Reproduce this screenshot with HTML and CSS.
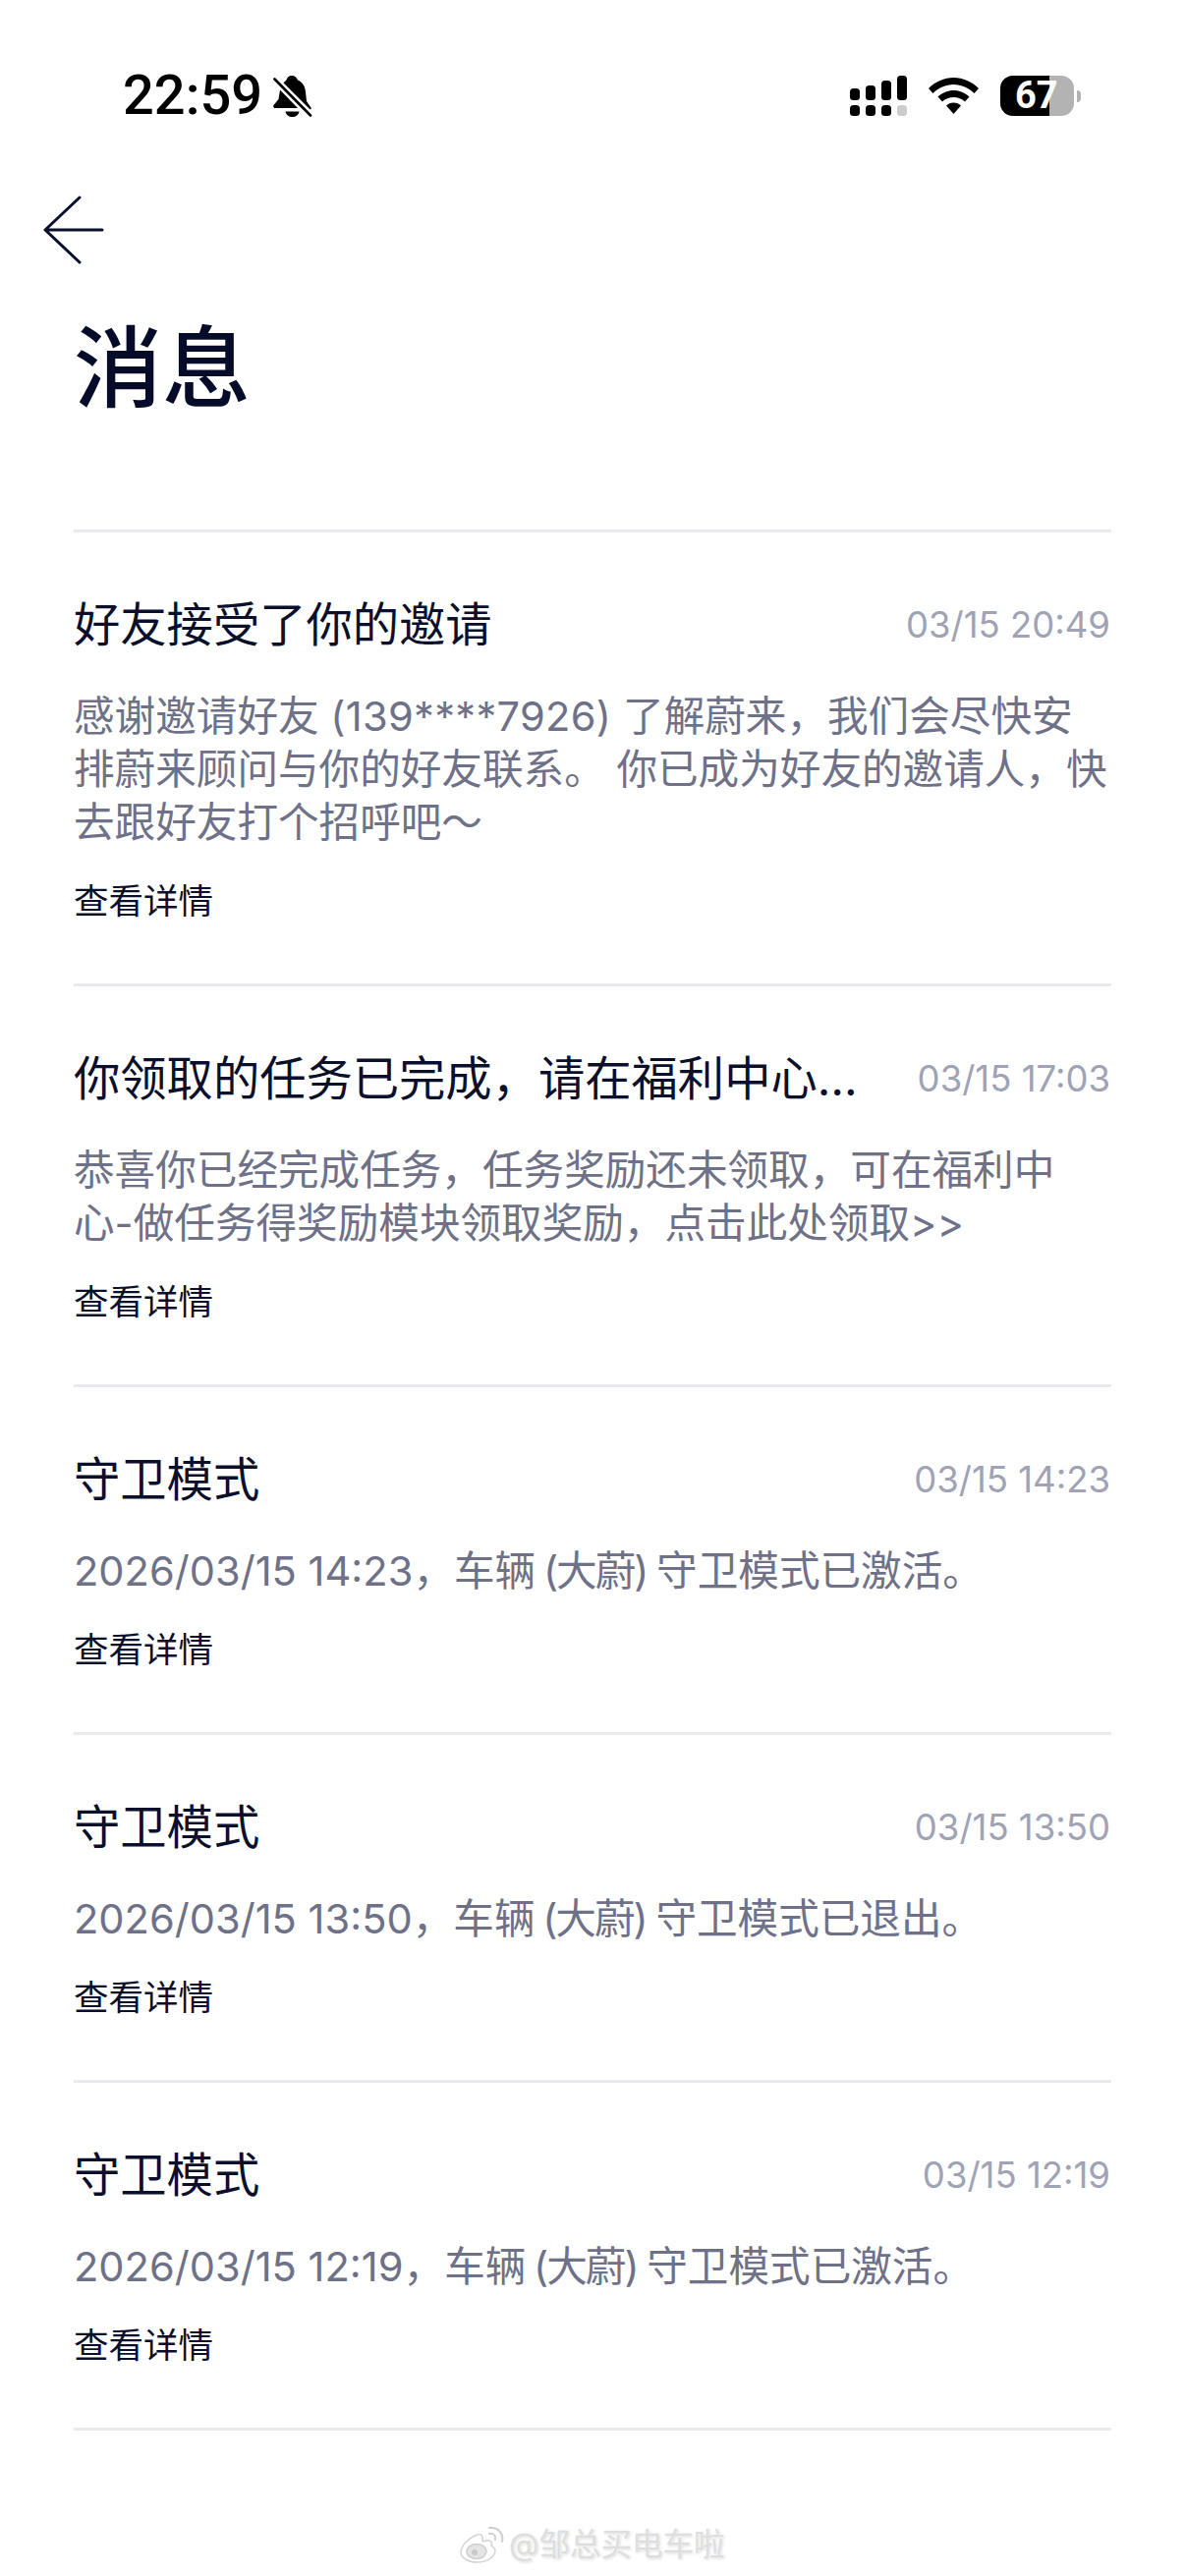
FILE: index.html
```html
<!DOCTYPE html>
<html>
<head>
    <meta charset="utf-8">
    <link rel="stylesheet" href="styles.css">
</head>
<body>
    <div class="phone">
        <div class="status-bar">
            <div class="status-left">
                <span class="time">22:59</span>
                <svg class="bell" width="40" height="42" viewBox="0 0 40 42">
                    <path d="M19 0c3 0 5 2 6 4.500 5 2 7.500 6.500 8 12l1 9.500 4.500 6.500c.5 1 0 2-1 2h-1.500L9.500 8.500C11 6.500 13 5 13.500 4.500 14 2 16 0 19 0z"/>
                    <path d="M7 14.500 25 33H2c-1.500 0-2.300-1.500-1.500-3L5.500 24z"/>
                    <path d="M12.500 36.500h14c-.5 3.500-3.500 5.500-7 5.500s-6.500-2-7-5.500z"/>
                    <path class="bell-gap" d="M5 3.500 39 37.500"/>
                    <path class="bell-slash" d="M1.500 3.500 38 40.500"/>
                </svg>
            </div>
            <div class="status-right">
                <svg class="signal" width="58" height="41" viewBox="0 0 58 41">
                    <rect x="0" y="13" width="10" height="12" rx="3.500"/>
                    <rect x="16" y="10" width="10" height="15" rx="3.500"/>
                    <rect x="32" y="5" width="10" height="20" rx="3.500"/>
                    <rect x="48" y="0" width="10" height="25" rx="3.500"/>
                    <rect x="0" y="30" width="10" height="11" rx="3.500"/>
                    <rect x="16" y="30" width="10" height="11" rx="3.500"/>
                    <rect x="32" y="30" width="10" height="11" rx="3.500"/>
                    <rect x="48" y="30" width="10" height="11" rx="3.500" fill="#ccc"/>
                </svg>
                <svg class="wifi" width="51" height="37" viewBox="0 0 51 37">
                    <path d="M25.500 0C35 0 44 4 51 11l-4.500 5C41 10.500 33.500 7 25.500 7S10 10.500 4.500 16L0 11C7 4 16 0 25.500 0z"/>
                    <path d="M25.500 13c6 0 11.500 2.500 16 6.500l-4.500 5c-3-3-7-4.500-11.500-4.500S17 21.500 14 24.500l-4.500-5C14 15.500 19.500 13 25.500 13z"/>
                    <path d="M25.500 25.500c3 0 5.500 1 7.500 3L25.500 37 18 28.500c2-2 4.500-3 7.500-3z"/>
                </svg>
                <div class="battery">
                    <div class="battery-body"><span class="battery-fill"></span><span class="battery-num">67</span></div>
                    <span class="battery-nub"></span>
                </div>
            </div>
        </div>

        <div class="nav">
            <svg class="back" width="64" height="70" viewBox="0 0 64 70">
                <path d="M38 2 3 35l35 33M3 35h58"/>
            </svg>
        </div>
        <h1 class="page-title">消息</h1>

        <ul class="msg-list">
            <li class="msg">
                <div class="msg-head">
                    <span class="msg-title">好友接受了你的邀请</span>
                    <span class="msg-date">03/15 20:49</span>
                </div>
                <p class="msg-body">感谢邀请好友 <span class="phone-num">(139****7926)</span> 了解蔚来，我们会尽快安<br>排蔚来顾问与你的好友联系。 你已成为好友的邀请人，快<br>去跟好友打个招呼吧～</p>
                <a class="msg-link">查看详情</a>
            </li>
            <li class="msg">
                <div class="msg-head">
                    <span class="msg-title">你领取的任务已完成，请在福利中心…</span>
                    <span class="msg-date">03/15 17:03</span>
                </div>
                <p class="msg-body">恭喜你已经完成任务，任务奖励还未领取，可在福利中<br>心-做任务得奖励模块领取奖励，点击此处领取&gt;&gt;</p>
                <a class="msg-link">查看详情</a>
            </li>
            <li class="msg">
                <div class="msg-head">
                    <span class="msg-title">守卫模式</span>
                    <span class="msg-date">03/15 14:23</span>
                </div>
                <p class="msg-body">2026/03/15 14:23，车辆 <span class="car-name">(大蔚)</span> 守卫模式已激活。</p>
                <a class="msg-link">查看详情</a>
            </li>
            <li class="msg">
                <div class="msg-head">
                    <span class="msg-title">守卫模式</span>
                    <span class="msg-date">03/15 13:50</span>
                </div>
                <p class="msg-body">2026/03/15 13:50，车辆 <span class="car-name">(大蔚)</span> 守卫模式已退出。</p>
                <a class="msg-link">查看详情</a>
            </li>
            <li class="msg">
                <div class="msg-head">
                    <span class="msg-title">守卫模式</span>
                    <span class="msg-date">03/15 12:19</span>
                </div>
                <p class="msg-body">2026/03/15 12:19，车辆 <span class="car-name">(大蔚)</span> 守卫模式已激活。</p>
                <a class="msg-link">查看详情</a>
            </li>
        </ul>

        <div class="watermark">
            <svg class="weibo" width="46" height="38" viewBox="0 0 46 38">
                <path d="M18 9C9 12 1 20 1 27c0 6 8 10 17 10s18-5 18-12c0-3-3-4-4-5 1-3 0-6-5-5-3 1-4 1-4 0 1-4-1-8-5-6z" fill="#fff" stroke="#d4d4d4" stroke-width="1.500"/>
                <ellipse cx="17" cy="26" rx="10" ry="7.500" fill="#e4e4e4" stroke="#cfcfcf" stroke-width="1.500"/>
                <circle cx="15" cy="27" r="3" fill="#c8c8c8"/>
                <path d="M30 8c4-1 7 2 6 6M30 2c8-1 15 5 13 14" fill="none" stroke="#cfcfcf" stroke-width="2" stroke-linecap="round"/>
            </svg>
            <span>@邹总买电车啦</span>
        </div>
    </div>
</body>
</html>
```

FILE: styles.css
```css
* {
    box-sizing: border-box;
    margin: 0;
    padding: 0;
}

body {
    background: white;
    font-family: Inter, "Noto Sans CJK SC", sans-serif;
}

.phone {
    position: relative;
    width: 1206px;
    height: 2622px;
    overflow: hidden;
    background: white;
}

.status-bar {
    display: flex;
    justify-content: space-between;
    align-items: center;
    height: 41px;
    margin-top: 77px;
    padding: 0 106px 0 125px;
}

.status-left {
    display: flex;
    align-items: center;
    gap: 11px;
}

.time {
    font-family: Roboto, sans-serif;
    font-size: 56px;
    font-weight: 500;
    line-height: 41px;
    color: #000;
}

.bell-gap {
    stroke: white;
    stroke-width: 2.400;
}

.bell-slash {
    stroke: black;
    stroke-width: 2.600;
    stroke-linecap: round;
}

.status-right {
    display: flex;
    align-items: center;
    gap: 22px;
}

.battery {
    display: flex;
    align-items: center;
    gap: 3px;
}

.battery-body {
    position: relative;
    width: 75px;
    height: 41px;
    border-radius: 13px;
    background: #b3b3b3;
}

.battery-fill {
    position: absolute;
    left: 0;
    top: 0;
    bottom: 0;
    width: 50px;
    border-radius: 13px 0 0 13px;
    background: #000;
}

.battery-num {
    position: absolute;
    left: 15px;
    top: 0;
    font-family: Roboto, sans-serif;
    font-size: 38px;
    font-weight: 700;
    line-height: 41px;
    color: white;
}

.battery-nub {
    width: 4px;
    height: 12px;
    border-radius: 0 4px 4px 0;
    background: #b3b3b3;
}

.nav {
    height: 202px;
    padding: 81px 0 0 43px;
}

.back {
    display: block;
    fill: none;
    stroke: #0a0f2c;
    stroke-width: 3;
    stroke-linecap: round;
    stroke-linejoin: round;
}

.page-title {
    font-size: 90px;
    font-weight: 500;
    line-height: 110px;
    color: #060b2a;
    padding-left: 75px;
}

.msg-list {
    list-style: none;
    margin: 109px 75px 0;
    border-bottom: 3px solid #e9eaee;
}

.msg {
    border-top: 3px solid #e9eaee;
    padding: 64px 0 58px;
}

.msg-head {
    display: flex;
    justify-content: space-between;
    align-items: center;
    gap: 48px;
    height: 60px;
}

.msg-title {
    flex: 1;
    font-size: 47.300px;
    line-height: 60px;
    color: #0a0f2c;
    white-space: nowrap;
}

.msg-date {
    flex-shrink: 0;
    padding-right: 1px;
    font-size: 36.500px;
    color: #a0a3b5;
}

.msg-body {
    margin-top: 36px;
    font-size: 41.600px;
    line-height: 54px;
    color: #6e7187;
    white-space: nowrap;
}

.phone-num {
    letter-spacing: .3px;
}

.car-name {
    margin: 0 -2px 0 -4px;
    letter-spacing: -2px;
}

.msg-link {
    display: block;
    margin-top: 29px;
    font-size: 35.500px;
    line-height: 50px;
    color: #0a0f2c;
}

.watermark {
    position: absolute;
    left: 468px;
    top: 2570px;
    display: flex;
    align-items: center;
    gap: 4px;
    font-size: 31.500px;
    line-height: 40px;
    color: #dedede;
    text-shadow: 0 0 3px #fff, 1px 1px 3px #ccc;
}
```
